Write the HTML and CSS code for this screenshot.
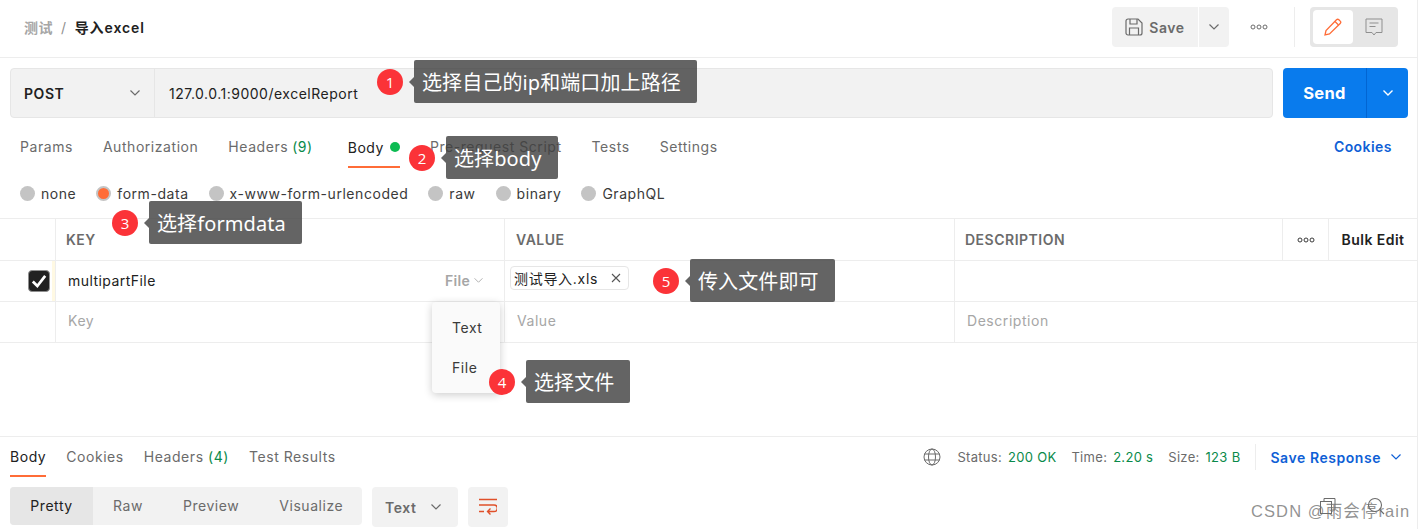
FILE: index.html
```html
<!DOCTYPE html>
<html lang="zh">
<head>
<meta charset="utf-8">
<title>导入excel</title>
<link rel="stylesheet" href="styles.css">
</head>
<body>
<div class="app">
  <header class="top">
    <div class="crumb"><span class="crumb-parent">测试</span><span class="crumb-sep">/</span><span class="crumb-name">导入excel</span></div>
    <div class="top-actions">
      <div class="save-btn">
        <svg class="ico18" viewBox="0 0 18 18" fill="none" stroke="#6b6b6b" stroke-width="1.2"><path d="M1 3a2 2 0 0 1 2-2h10l4 4v10a2 2 0 0 1-2 2H3a2 2 0 0 1-2-2z"/><path d="M5 1v5h7V1M4.500 17v-7h9v7"/></svg>
        <span>Save</span>
      </div>
      <div class="save-caret"><svg class="chev" viewBox="0 0 12 8" fill="none" stroke="#6b6b6b" stroke-width="1.200"><path d="M1.500 1.500 6 6l4.500-4.500"/></svg></div>
      <div class="dots-wrap"><svg class="dots" viewBox="0 0 18 6" fill="none" stroke="#6b6b6b" stroke-width="1"><circle cx="3" cy="3" r="2"/><circle cx="9" cy="3" r="2"/><circle cx="15" cy="3" r="2"/></svg></div>
      <div class="vline"></div>
      <div class="toggle">
        <div class="toggle-on"><svg class="ico18" viewBox="0 0 18 18" fill="none" stroke="#ff6c37" stroke-width="1.300"><path d="M1 17l1-4.500L12.500 1.800a1.700 1.700 0 0 1 2.400 0l1.300 1.300a1.700 1.700 0 0 1 0 2.400L5.500 16z"/><path d="M11 3.500l3.500 3.500"/></svg></div>
        <div class="toggle-off"><svg class="ico18" viewBox="0 0 18 18" fill="none" stroke="#8f8f8f" stroke-width="1"><path d="M1 1h16v13.500h-6L9 17l-2-2.500H1z"/><path d="M4.500 5h9M4.500 8.500h6"/></svg></div>
      </div>
    </div>
  </header>

  <section class="url-row">
    <div class="url-box">
      <div class="method"><span>POST</span><svg class="chev" viewBox="0 0 12 8" fill="none" stroke="#6b6b6b" stroke-width="1.200"><path d="M1.500 1.500 6 6l4.500-4.500"/></svg></div>
      <div class="url-text">127.0.0.1:9000/excelReport</div>
    </div>
    <div class="send">
      <div class="send-main">Send</div>
      <div class="send-caret"><svg class="chev" viewBox="0 0 12 8" fill="none" stroke="#fff" stroke-width="1.400"><path d="M1.500 1.500 6 6l4.500-4.500"/></svg></div>
    </div>
  </section>

  <nav class="req-tabs">
    <span class="tab">Params</span>
    <span class="tab">Authorization</span>
    <span class="tab tab-headers">Headers <i class="count">(9)</i></span>
    <span class="tab tab-active">Body <b class="green-dot"></b></span>
    <span class="tab">Pre-request Script</span>
    <span class="tab">Tests</span>
    <span class="tab">Settings</span>
    <span class="cookies">Cookies</span>
  </nav>

  <div class="radios">
    <label class="radio"><b class="dot"></b>none</label>
    <label class="radio"><b class="dot dot-on"></b>form-data</label>
    <label class="radio"><b class="dot"></b>x-www-form-urlencoded</label>
    <label class="radio"><b class="dot"></b>raw</label>
    <label class="radio"><b class="dot"></b>binary</label>
    <label class="radio"><b class="dot"></b>GraphQL</label>
  </div>

  <div class="table">
    <div class="row head">
      <div class="cell"></div>
      <div class="cell pad">KEY</div>
      <div class="cell pad pad-value">VALUE</div>
      <div class="cell pad">DESCRIPTION</div>
      <div class="cell center"><svg class="dots" viewBox="0 0 18 6" fill="none" stroke="#3a3a3a" stroke-width="1"><circle cx="3" cy="3" r="2"/><circle cx="9" cy="3" r="2"/><circle cx="15" cy="3" r="2"/></svg></div>
      <div class="cell center bulk">Bulk Edit</div>
    </div>
    <div class="row row-a">
      <div class="cell check-cell"><span class="check"><svg viewBox="0 0 16 16" fill="none" stroke="#fff" stroke-width="2.400"><path d="M2.500 8.500 6.500 12.500 13.500 3.500"/></svg></span></div>
      <div class="cell key-cell"><span>multipartFile</span><span class="file-sel">File <svg class="chev-s" viewBox="0 0 12 8" fill="none" stroke="#a6a6a6" stroke-width="1"><path d="M1.500 1.500 6 6l4.500-4.500"/></svg></span></div>
      <div class="cell value-cell"><span class="chip">测试导入.xls<svg class="x" viewBox="0 0 10 10" fill="none" stroke="#555" stroke-width="1.100"><path d="M1 1l8 8M9 1l-8 8"/></svg></span></div>
      <div class="cell span3"></div>
    </div>
    <div class="row ph">
      <div class="cell"></div>
      <div class="cell pad2">Key</div>
      <div class="cell pad2">Value</div>
      <div class="cell span3 pad2">Description</div>
    </div>
  </div>

  <div class="spacer"></div>

  <section class="res">
    <div class="res-top">
      <nav class="res-tabs">
        <span class="rtab rtab-active">Body</span>
        <span class="rtab">Cookies</span>
        <span class="rtab">Headers <i class="count">(4)</i></span>
        <span class="rtab">Test Results</span>
      </nav>
      <div class="res-meta">
        <svg class="globe" viewBox="0 0 18 18" fill="none" stroke="#6b6b6b" stroke-width="1"><circle cx="9" cy="9" r="8"/><ellipse cx="9" cy="9" rx="3.500" ry="8"/><path d="M1.500 6h15M1.500 12h15"/></svg>
        <span class="stat">Status: <em>200 OK</em></span>
        <span class="stat">Time: <em>2.20 s</em></span>
        <span class="stat">Size: <em>123 B</em></span>
        <span class="meta-line"></span>
        <span class="save-res">Save Response<svg class="chev" viewBox="0 0 12 8" fill="none" stroke="#0f5fd6" stroke-width="1.200"><path d="M1.500 1.500 6 6l4.500-4.500"/></svg></span>
      </div>
    </div>
    <div class="res-bar">
      <div class="seg"><span class="seg-on">Pretty</span><span class="seg-item">Raw</span><span class="seg-item">Preview</span><span class="seg-item">Visualize</span></div>
      <div class="fmt"><span>Text</span><svg class="chev" viewBox="0 0 12 8" fill="none" stroke="#6b6b6b" stroke-width="1.200"><path d="M1.500 1.500 6 6l4.500-4.500"/></svg></div>
      <div class="wrap-btn"><svg class="ico18" viewBox="0 0 18 18" fill="none" stroke="#e0502a" stroke-width="1.400"><path d="M0 1.500h18M0 7h15a3 3 0 0 1 0 6.500H9M0 13.500h5M11.500 10.500 8.500 13.500l3 3"/></svg></div>
      <div class="res-icons">
        <svg class="ico18" viewBox="0 0 18 18" fill="none" stroke="#6b6b6b" stroke-width="1"><path d="M5 4V1.500h11V13h-3"/><rect x="1.500" y="4.500" width="11" height="12"/></svg>
        <svg class="ico18" viewBox="0 0 18 18" fill="none" stroke="#6b6b6b" stroke-width="1.100"><circle cx="8" cy="8" r="6.500"/><path d="M13 13l4 4"/></svg>
      </div>
    </div>
  </section>
</div>

<div class="menu"><span>Text</span><span>File</span></div>

<div class="note n1"><b class="num">1</b><span class="tip">选择自己的ip和端口加上路径</span></div>
<div class="note n2"><b class="num">2</b><span class="tip">选择body</span></div>
<div class="note n3"><b class="num">3</b><span class="tip">选择formdata</span></div>
<div class="note n4"><b class="num">4</b><span class="tip">选择文件</span></div>
<div class="note n5"><b class="num">5</b><span class="tip">传入文件即可</span></div>

<div class="mark">CSDN @雨会停rain</div>
</body>
</html>
```
FILE: styles.css
```css
* { box-sizing: border-box; }
html, body { margin: 0; padding: 0; height: 529px; overflow: hidden; background: #fff; }
body { position: relative; font-family: Inter, "Noto Sans CJK SC", sans-serif; font-size: 14px; letter-spacing: .55px; color: #6b6b6b; }
em, i { font-style: normal; }
svg { display: block; flex: none; }
.app { width: 1418px; height: 529px; border-right: 1px solid #ededed; display: flex; flex-direction: column; }
.ico18 { width: 18px; height: 18px; }
.chev { width: 12px; height: 8px; }
.chev-s { width: 11px; height: 7px; }
.dots { width: 18px; height: 6px; }

.top { height: 58px; flex: none; border-bottom: 1px solid #ededed; display: flex; align-items: flex-start; justify-content: space-between; padding: 7px 19px 0 24px; }
.crumb { display: flex; gap: 8px; align-items: center; height: 40px; font-size: 14px; font-weight: 600; }
.crumb-parent { color: #a6a6a6; }
.crumb-sep { color: #8f8f8f; font-weight: 400; }
.crumb-name { color: #212121; letter-spacing: .9px; }
.top-actions { display: flex; align-items: center; height: 40px; }
.save-btn { width: 86px; height: 40px; background: #f2f2f2; border-radius: 4px 0 0 4px; display: flex; align-items: center; justify-content: center; gap: 6px; font-weight: 600; margin-right: 1px; }
.save-caret { width: 30px; height: 40px; background: #f2f2f2; border-radius: 0 4px 4px 0; display: flex; align-items: center; justify-content: center; }
.dots-wrap { width: 65px; padding-right: 5px; display: flex; justify-content: center; }
.vline { width: 1px; height: 40px; background: #ededed; margin-right: 15px; }
.toggle { width: 88px; height: 40px; background: #e6e6e6; border-radius: 4px; padding: 3px; display: flex; }
.toggle-on { width: 40px; height: 34px; background: #fff; border-radius: 4px; display: flex; align-items: center; justify-content: center; }
.toggle-off { width: 42px; height: 34px; display: flex; align-items: center; justify-content: center; }

.url-row { flex: none; display: flex; gap: 10px; padding: 10px 9px 0 10px; height: 60px; }
.url-box { flex: 1; height: 50px; display: flex; background: #f2f2f2; border: 1px solid #e6e6e6; border-radius: 4px; }
.method { width: 144px; flex: none; border-right: 1px solid #e6e6e6; display: flex; align-items: center; justify-content: space-between; padding: 0 13px; font-weight: 600; color: #212121; }
.url-text { padding: 0 14px; display: flex; align-items: center; color: #212121; letter-spacing: .5px; }
.send { width: 125px; height: 50px; background: #097bed; border-radius: 4px; display: flex; color: #fff; }
.send-main { width: 84px; border-right: 1px solid #0265d2; font-size: 16.500px; font-weight: 700; display: flex; align-items: center; justify-content: center; letter-spacing: .3px; }
.send-caret { flex: 1; display: flex; align-items: center; justify-content: center; }

.req-tabs { flex: none; height: 50px; display: flex; align-items: flex-start; gap: 30px; padding: 10px 25px 0 20px; }
.tab { height: 40px; padding-top: 10px; color: #6b6b6b; display: flex; gap: 4px; align-items: baseline; }
.tab-headers { margin-right: 5px; }
.count { color: #0a8a4a; }
.tab-active { color: #212121; border-bottom: 2px solid #ff6c37; align-items: center; padding-top: 0; }
.green-dot { width: 10px; height: 10px; border-radius: 50%; background: #0cbb52; display: block; margin-left: 2px; }
.cookies { margin-left: auto; padding-top: 10px; color: #0f5fd6; font-weight: 600; letter-spacing: .45px; }

.radios { flex: none; height: 51px; display: flex; align-items: center; gap: 20px; padding: 0 20px; border-bottom: 1px solid #ededed; }
.radio { display: flex; align-items: center; gap: 6px; color: #3a3a3a; }
.dot { width: 15px; height: 15px; border-radius: 50%; background: #c4c4c4; display: block; }
.dot-on { background: #ff6c37; border: 2px solid #c4c4c4; }

.table { flex: none; }
.row { height: 41px; display: grid; grid-template-columns: 56px 449px 450px 328px 46px 1fr; border-bottom: 1px solid #ededed; color: #212121; }
.head { height: 42px; color: #6b6b6b; font-weight: 600; letter-spacing: .5px; }
.row-a .cell { padding-bottom: 2px; }
.ph .cell { padding-bottom: 3px; }
.cell { border-right: 1px solid #ededed; display: flex; align-items: center; min-width: 0; }
.cell:last-child { border-right: 0; }
.span3 { grid-column: span 3; }
.pad { padding-left: 10px; }
.pad-value { padding-left: 11px; }
.pad2 { padding-left: 12px; color: #a6a6a6; }
.center { justify-content: center; }
.bulk { color: #212121; letter-spacing: .45px; }
.row-a .check-cell { justify-content: flex-end; padding: 0 5px 1px 0; box-shadow: inset -3px 0 0 #fff9e3; }
.check { width: 22px; height: 22px; background: #212121; border: 1px solid #8f8f8f; border-radius: 4px; display: flex; align-items: center; justify-content: center; }
.check svg { width: 18px; height: 18px; }
.key-cell { padding: 0 20px 0 12px; justify-content: space-between; letter-spacing: .45px; }
.file-sel { color: #a6a6a6; font-weight: 600; display: flex; align-items: center; gap: 3px; letter-spacing: .3px; }
.row-a .value-cell { padding: 0 0 6px 5px; }
.chip { height: 24px; padding: 0 7px 0 3px; display: flex; align-items: center; gap: 13px; border: 1px solid #e6e6e6; border-radius: 4px; letter-spacing: .7px; }
.x { width: 10px; height: 10px; }

.spacer { flex: 1; }
.res { flex: none; height: 93px; border-top: 1px solid #ededed; padding: 0 0 0 10px; }
.res-top { height: 50px; display: flex; justify-content: space-between; align-items: flex-start; }
.res-tabs { display: flex; gap: 20px; }
.rtab { height: 40px; padding-top: 11px; }
.rtab-active { color: #212121; border-bottom: 2px solid #ff6c37; }
.res-meta { display: flex; align-items: center; height: 40px; font-size: 13px; padding-right: 15px; letter-spacing: .3px; }
.globe { width: 18px; height: 18px; margin-right: 16px; }
.stat { margin-right: 15px; }
.stat em { color: #0a8a4a; padding-left: 2px; }
.meta-line { width: 1px; height: 26px; background: #ededed; margin: 0 14px 0 0; }
.save-res { color: #0f5fd6; font-size: 14px; font-weight: 600; display: flex; align-items: center; gap: 9px; letter-spacing: .55px; }
.res-bar { display: flex; gap: 10px; }
.seg { width: 352px; height: 38px; background: #f2f2f2; border-radius: 4px; display: flex; overflow: hidden; }
.seg-on { width: 83px; flex: none; background: #e6e6e6; color: #212121; display: flex; align-items: center; justify-content: center; padding-bottom: 1px; }
.seg-item { padding: 0 20px 1px; flex: none; display: flex; align-items: center; }
.fmt { width: 86px; height: 40px; background: #f2f2f2; border-radius: 4px; display: flex; align-items: center; justify-content: space-between; padding: 0 16px 0 13px; font-weight: 600; }
.wrap-btn { width: 40px; height: 40px; background: #f2f2f2; border-radius: 4px; display: flex; align-items: center; justify-content: center; }
.res-icons { margin-left: auto; display: flex; gap: 30px; padding: 10px 32px 0 0; }

.menu { position: absolute; left: 432px; top: 302px; width: 68px; height: 91px; background: #fafafa; border-radius: 4px; box-shadow: 0 2px 8px rgba(0,0,0,.2); display: flex; flex-direction: column; gap: 20px; padding: 16px 0 0 20px; color: #3a3a3a; line-height: 20px; }
.note { position: absolute; display: flex; align-items: center; letter-spacing: .1px; }
.num { width: 26px; height: 26px; border-radius: 50%; background: #fb3338; color: #fff; font-weight: 400; font-size: 15px; display: flex; align-items: center; justify-content: center; font-family: "Open Sans", sans-serif; }
.tip { position: relative; margin-left: 11px; background: rgba(61,61,61,.8); color: #fff; font-size: 20px; border-radius: 2px; display: flex; align-items: center; white-space: nowrap; height: 43px; padding: 0 16px 0 8px; font-family: "Noto Sans", "Noto Sans CJK SC", sans-serif; }
.tip::before { content: ""; position: absolute; left: -5px; top: 50%; margin-top: -5px; border: 5px solid transparent; border-left: 0; border-right-color: rgba(61,61,61,.8); }
.n1 { left: 377px; top: 60px; }
.n2 { left: 409px; top: 136px; }
.n3 { left: 112px; top: 201px; }
.n4 { left: 489px; top: 360px; }
.n5 { left: 653px; top: 259px; }
.mark { position: absolute; left: 1251px; top: 498px; font-size: 16.500px; letter-spacing: 1.1px; color: rgba(110,110,110,.75); font-family: "Liberation Sans", "Noto Sans CJK SC", sans-serif; }
```
